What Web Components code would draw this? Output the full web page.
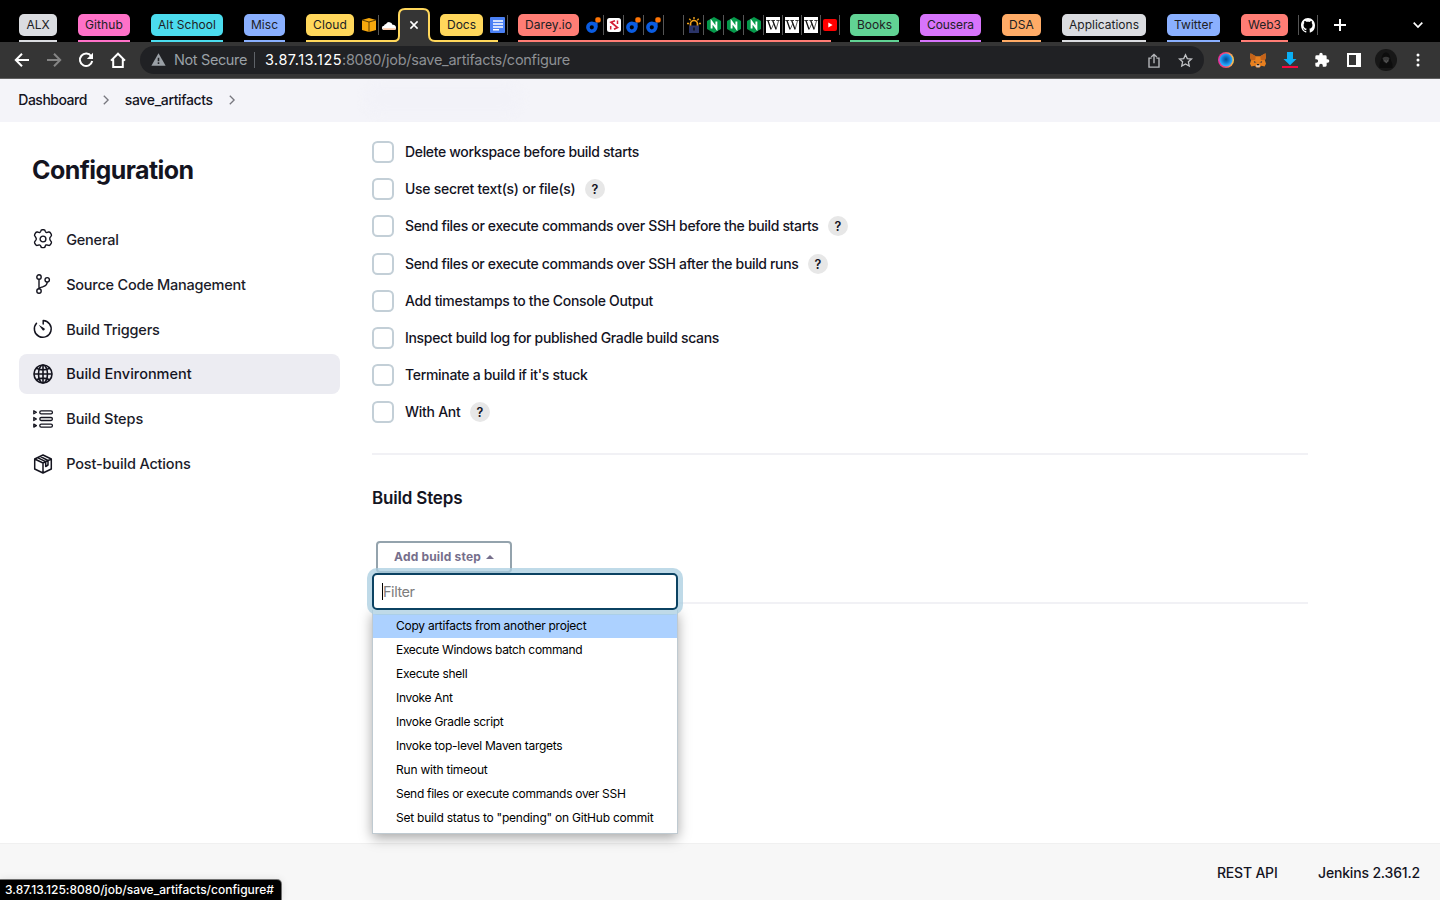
<!DOCTYPE html>
<html lang="en">
<head>
<meta charset="utf-8">
<title>save_artifacts Config [Jenkins]</title>
<style>
html,body{margin:0;height:100%;overflow:hidden;background:#fff}
body{font-family:Inter,"Liberation Sans",sans-serif;font-size:14px;color:#14141f}
</style>
</head>
<body>
<jenkins-window></jenkins-window>
<script>
const define = (name, html, extra) => {
  const t = document.createElement('template');
  t.innerHTML = html;
  customElements.define(name, class extends HTMLElement {
    constructor() {
      super();
      this.attachShadow({mode: 'open'}).appendChild(t.content.cloneNode(true));
    }
    connectedCallback() { if (extra) extra(this, this.shadowRoot); }
  });
};

const ICONS = {
  back: ['0 0 16 16', '<path d="M15 8H2M8 1.8 1.8 8 8 14.2" fill="none" stroke="#fff" stroke-width="2"/>'],
  forward: ['0 0 16 16', '<path d="M1 8h13M8 1.8 14.2 8 8 14.2" fill="none" stroke="#858585" stroke-width="2"/>'],
  reload: ['0 0 16 16', '<path d="M13.2 4.2A6.2 6.2 0 1 0 14.2 9" fill="none" stroke="#fff" stroke-width="2"/><path d="M15 .8V7H8.8z" fill="#fff"/>'],
  home: ['0 0 16 16', '<path d="M1 8.6 8 1.7l7 6.9M3.2 7.2V15h9.6V7.2" fill="none" stroke="#fff" stroke-width="2"/>'],
  warn: ['0 0 16 14', '<path d="M8 .4 15.6 13.6H.4z" fill="#9aa0a6"/><path d="M8 5.2v3.6M8 10v1.8" stroke="#202124" stroke-width="1.7"/>'],
  share: ['0 0 12 16', '<path d="M3.6 5.5H1V15h10V5.5H8.4M6 11V1.6M3.2 4.3 6 1.5l2.8 2.8" fill="none" stroke="#b4b6b9" stroke-width="1.4"/>'],
  star: ['0 0 16 16', '<path d="m8 1.800 1.900 4.100 4.500.5-3.300 3 .9 4.500L8 11.700l-4 2.200.9-4.500-3.300-3 4.500-.5z" fill="none" stroke="#c0c2c5" stroke-width="1.400"/>'],
  orb: ['0 0 16 16', '<defs><linearGradient id="g" x1="0" x2="1"><stop offset="0" stop-color="#f02aa0"/><stop offset=".5" stop-color="#f04a6a"/><stop offset="1" stop-color="#ffd34d"/></linearGradient><radialGradient id="b" cx=".5" cy=".45"><stop stop-color="#064a8c"/><stop offset=".5" stop-color="#0f78d0"/><stop offset="1" stop-color="#2fb0ff"/></radialGradient></defs><circle cx="8" cy="8" r="8" fill="url(#g)"/><circle cx="8" cy="8" r="6.500" fill="url(#b)"/>'],
  fox: ['0 0 16 16', '<path d="m.5.2 5.300 3.300h4.400L15.500.2l.3 4.800-.9 2.800 1.100 3.700-1.400 3-3.300-.9-1.800 1.900h-3l-1.800-1.900-3.300.9-1.400-3 1.100-3.700L.2 5z" fill="#e8801f"/><path d="m.5.2 5.300 3.300-.6 4-4.200.3L.2 5zM15.500.2l-5.300 3.300.6 4 4.200.3.800-2.800z" fill="#c4631a"/><path d="m3.800 8.600 2.700 1.300-2.300.5zM12.200 8.600 9.500 9.900l2.300.5z" fill="#3a3a44"/><path d="m6 13.400.9-1.100h2.200l.9 1.100-.5 1.800h-3z" fill="#d5bfb2"/><path d="m6.800 12.300.4-.7h1.600l.4.7-.2.800H7z" fill="#222"/>'],
  download: ['0 0 16 16', '<path d="M5 0h6v7h3.500L8 13.200 1.500 7H5z" fill="#0ab0f5"/><path d="M0 14h16v2H0z" fill="#f5083c"/>'],
  puzzle: ['0 0 24 24', '<path d="M20.500 11H19V7a2 2 0 0 0-2-2h-4V3.500a2.500 2.500 0 0 0-5 0V5H4a2 2 0 0 0-2 2v3.800h1.500a2.700 2.700 0 0 1 0 5.400H2V20a2 2 0 0 0 2 2h3.800v-1.500a2.700 2.700 0 0 1 5.400 0V22H17a2 2 0 0 0 2-2v-4h1.500a2.500 2.500 0 0 0 0-5z" fill="#fff"/>'],
  panel: ['0 0 14 14', '<path d="M0 0h14v14H0z" fill="#fff"/><path d="M2 2h7v10H2z" fill="#353535"/>'],
  avatar: ['0 0 22 22', '<circle cx="11" cy="11" r="11" fill="#171717"/><path d="M4.500 19c-.5-5 1-6 1.800-9C7 5.500 9 3.500 11 3.500s4 2 4.700 6.500c.5 3 2.300 4 1.800 9z" fill="#0d0d0d"/><path d="M7.500 9q3.500-2.500 7 0l-1 3.500-2.300 2-2.500-2z" fill="#3a3a3a"/><path d="m9.500 11 2 2.500 1.500-2.500" fill="none" stroke="#5c5c5c" stroke-width=".9"/>'],
  dots: ['0 0 4 14', '<circle cx="2" cy="2" r="1.500" fill="#fff"/><circle cx="2" cy="7" r="1.500" fill="#fff"/><circle cx="2" cy="12" r="1.500" fill="#fff"/>'],
  plus: ['0 0 12 12', '<path d="M6 0v12M0 6h12" stroke="#fff" stroke-width="2"/>'],
  down: ['0 0 10 6', '<path d="m.7.700 4.300 4.300L9.300.7" fill="none" stroke="#fff" stroke-width="1.700"/>'],
  close: ['0 0 8 8', '<path d="m.4.4 7.200 7.200M7.600.4.4 7.600" stroke="#fff" stroke-width="1.500"/>'],
  cube: ['0 0 14 14', '<path d="m7 0 7 2v10l-7 2-7-2V2z" fill="#f7a80d"/><path d="m0 2 7 2 7-2M7 4v10" stroke="#4c3200" fill="none" stroke-width=".9"/>'],
  cloud: ['0 0 14 9', '<path d="M2 9a2 2 0 0 1 0-4.200A2.300 2.300 0 0 1 4 3a3.500 3.500 0 0 1 6.500.800A3 3 0 0 1 14 7a2 2 0 0 1-1 2z" fill="#fff"/><path d="M.5 7.200h13.300L13 9H2z" fill="#fbc5a2"/>'],
  doc: ['0 0 15 16', '<rect width="15" height="16" rx="1" fill="#4a80f5"/><path d="M3 4h10M3 7h10M3 10h10M3 12.800h6" stroke="#fff" stroke-width="1.500"/>'],
  digital: ['0 0 15 16', '<circle cx="5.800" cy="10.300" r="3.900" fill="none" stroke="#0b5ce0" stroke-width="3.600"/><path d="M8 5.300h3.600v5H8z" fill="#0b5ce0"/><rect x="9.300" y=".3" width="5.400" height="5.200" rx="1.800" fill="#ff7505"/>'],
  script: ['0 0 14 14', '<rect width="14" height="14" rx="2.500" fill="#fff"/><path d="M8 2.800 4 4.200l6.500 5.300L7 11.300" fill="none" stroke="#d31f35" stroke-width="1.700"/><path d="M10.500 2.500v3.500M3.700 8v3.500" stroke="#d31f35" stroke-width="1.500"/>'],
  lock: ['0 0 14 16', '<path d="M7 0v2.200M2.300 1.700l1.500 1.700M11.700 1.700l-1.500 1.700M0 6.500h2M14 6.500h-2" stroke="#f0a21a" stroke-width="1.400"/><path d="M3.500 9V7a3.500 3.500 0 0 1 7 0v2" fill="none" stroke="#f5a21b" stroke-width="1.700"/><path d="M2 8.500h10V16H2z" fill="#2b3468"/><path d="M7 10.500v3" stroke="#111" stroke-width="1.600"/>'],
  nginx: ['0 0 14 16', '<path d="m7 0 7 4v8l-7 4-7-4V4z" fill="#059a4b"/><path d="M4.600 11.500V4.700l4.800 6.600V4.500" fill="none" stroke="#fff" stroke-width="1.900"/>'],
  wiki: ['0 0 14 16', '<path d="M0 0h14v16H0z" fill="#fff"/><path d="M.3 3.500h4M5.300 3.500h3.700M10.300 3.500h3.400" stroke="#222" stroke-width=".9"/><path d="m1.900 3.500 3.100 8.800M6.700 3.500l3.300 8.800" stroke="#111" stroke-width="1.300"/><path d="m5 12.600 2.800-6M10 12.600l2.600-9" stroke="#333" stroke-width=".8"/>'],
  youtube: ['0 0 14 12', '<rect width="14" height="12" rx="2" fill="#f00"/><path d="M5.300 3.600 9.600 6 5.300 8.400z" fill="#fff"/>'],
  github: ['0 0 16 16', '<path fill="#fff" d="M8 0C3.580 0 0 3.580 0 8c0 3.540 2.290 6.530 5.470 7.590.4.070.55-.17.55-.38v-1.490c-2.010.37-2.530-.49-2.690-.94-.09-.23-.48-.94-.82-1.130-.28-.15-.68-.52-.01-.53.63-.01 1.080.58 1.230.82.72 1.210 1.870.87 2.330.66.07-.52.28-.87.51-1.070-1.780-.2-3.640-.89-3.640-3.950 0-.87.31-1.590.82-2.150-.08-.2-.36-1.020.08-2.120 0 0 .67-.21 2.200.82A7.600 7.600 0 0 1 8 3.870c.68 0 1.360.09 2 .27 1.530-1.040 2.200-.82 2.200-.82.44 1.100.16 1.920.08 2.120.51.56.82 1.270.82 2.150 0 3.070-1.870 3.750-3.650 3.950.29.25.54.73.54 1.480v2.190c0 .21.15.46.55.38A8 8 0 0 0 16 8c0-4.420-3.580-8-8-8z"/>'],
  gear: ['0 0 20 20', '<g fill="none" stroke="#14141f" stroke-width="1.400"><circle cx="10" cy="10" r="2.900"/><path stroke-linejoin="round" d="M7.700 2.400Q8 .8 9.200.8h1.600q1.200 0 1.500 1.600.5 1.500 2 1l1.300-.4q1.200-.2 1.800.8l.9 1.500q.6 1.100-.5 2.200-1.500 1.300-1 2.500 0 .8 1 2 1.100 1.100.5 2.200l-.9 1.500q-.6 1-1.800.7l-1.300-.4q-1.500-.5-2 1-.3 1.600-1.500 1.600H9.200q-1.200 0-1.500-1.600-.5-1.500-2-1l-1.300.4q-1.200.3-1.800-.7l-.9-1.500q-.6-1.100.5-2.200 1.500-1.300 1-2.400 0-.8-1-2.100Q1.100 6.400 1.700 5.300l.9-1.500q.6-1 1.800-.8l1.300.4q1.500.5 2-1z"/></g>'],
  branch: ['0 0 20 20', '<g fill="none" stroke="#14141f" stroke-width="1.400"><circle cx="6" cy="3" r="2.200"/><circle cx="6" cy="17" r="2.200"/><circle cx="14.200" cy="5.800" r="2.200"/><path d="M6 5.200v9.600M14.200 8c0 3.800-2.500 4.200-4.500 4.800S6 13.500 6 15"/></g>'],
  timer: ['0 0 20 20', '<path d="M10.200 5V1.500A8.400 8.400 0 1 1 3.500 4.300" fill="none" stroke="#14141f" stroke-width="1.500" stroke-linecap="round" stroke-linejoin="round"/><path d="m5.600 5.800 6 3.800a1.300 1.300 0 0 1-1.700 1.800z" fill="#14141f"/>'],
  globe: ['0 0 20 20', '<g fill="none" stroke="#14141f" stroke-width="1.600"><circle cx="10" cy="10" r="9"/><ellipse cx="10" cy="10" rx="4.500" ry="9"/><path d="M10 1v18M1 10h18M3.300 4.300q6.700 3.200 13.400 0M3.300 15.700q6.700-3.200 13.400 0"/></g>'],
  steps: ['0 0 20 20', '<g fill="none" stroke="#14141f" stroke-width="1.300" stroke-linejoin="round"><rect x="6.800" y="1.800" width="12.600" height="3" rx="1.400"/><rect x="6.800" y="8.500" width="12.600" height="3" rx="1.400"/><rect x="6.800" y="15.100" width="12.600" height="3" rx="1.400"/><path d="M.8 1.800v3l2.600-1.500zM.8 8.500v3L3.400 10zM.8 15.100v3l2.600-1.500z"/></g>'],
  box: ['0 0 20 20', '<g fill="none" stroke="#14141f" stroke-width="1.500" stroke-linejoin="round"><path d="m10 1 8.300 4v10L10 19l-8.300-4V5zM1.700 5 10 9l8.300-4M10 9v10M4.500 3.700l8.200 4v4.800l2.300-1.500V6.500L7.200 2.400"/></g>'],
  crumb: ['0 0 6 10', '<path d="m.8.8 4.300 4.200L.8 9.200" fill="none" stroke="#77777f" stroke-width="1.300"/>'],
  caret: ['0 0 8 4', '<path d="M4 0 8 4H0z" fill="#766f8c"/>']
};

/* ui-icon: name, w, h */
define('ui-icon', `<style>:host{display:block;flex:none}svg{display:block;width:100%;height:100%;overflow:visible}</style>`, (el, root) => {
  const [box, body] = ICONS[el.getAttribute('name')];
  el.style.width = el.getAttribute('w') + 'px';
  el.style.height = el.getAttribute('h') + 'px';
  const holder = document.createElement('template');
  holder.innerHTML = `<svg viewBox="${box}" preserveAspectRatio="none">${body}</svg>`;
  root.appendChild(holder.content);
});

/* tab-chip: coloured group label */
define('tab-chip', `<style>:host{display:flex;align-items:center;justify-content:center;box-sizing:border-box;height:22px;flex:none;border-radius:5px;background:var(--c);color:#202124;font-size:12px;--lift:2px}</style><slot></slot>`,
  el => { el.style.width = el.getAttribute('w') + 'px'; });

/* tab-cell: a pinned-size tab with a favicon */
define('tab-cell', `<style>:host{display:flex;align-items:center;justify-content:center;box-sizing:border-box;height:20px;width:20px;flex:none;border-right:1px solid #555}:host([narrow]){width:19px}:host([plain]){border:0}</style><slot></slot>`);

/* tab-group: chip + tabs over a coloured line */
define('tab-group', `<style>:host{display:flex;flex-direction:column;height:28px;flex:none;justify-content:space-between;box-sizing:border-box}
.row{display:flex;align-items:center;height:22px}.line{height:2px;background:var(--c);margin-right:var(--trim,0)}</style>
<div class="row"><slot></slot></div><div class="line"></div>`, el => {
  el.style.setProperty('--c', el.getAttribute('color'));
  el.style.width = el.getAttribute('w') + 'px';
  el.style.marginRight = (el.getAttribute('after') || 21) + 'px';
});

define('browser-tabs', `<style>
:host{display:flex;box-sizing:border-box;height:42px;background:#000;padding:14px 0 0 19px;position:relative}
.active{display:block;width:46px;height:34px;margin:-6px 0 0 -3px;flex:none;position:relative}
.active svg{position:absolute;inset:0}.active ui-icon{position:absolute;left:16px;top:13px}
tab-chip+tab-cell{margin-left:5px}
.end{display:flex;align-items:center;height:22px}
.gh{display:flex;align-items:center;justify-content:center;width:18px;height:20px;border:solid #555;border-width:0 1px;margin-left:-11px}
</style>
<tab-group color="#dadce0" w="38"><tab-chip w="38"><ui-text w="23">ALX</ui-text></tab-chip></tab-group>
<tab-group color="#ff71c8" w="52"><tab-chip w="52"><ui-text w="38">Github</ui-text></tab-chip></tab-group>
<tab-group color="#4bdcee" w="72"><tab-chip w="72"><ui-text w="58">Alt School</ui-text></tab-chip></tab-group>
<tab-group color="#8ab0ff" w="41"><tab-chip w="41"><ui-text w="27">Misc</ui-text></tab-chip></tab-group>
<tab-group color="#ffd75b" w="91" after="0"><tab-chip w="48"><ui-text w="34">Cloud</ui-text></tab-chip><tab-cell><ui-icon name="cube" w="14" h="14"></ui-icon></tab-cell><tab-cell plain narrow><ui-icon name="cloud" w="14" h="9"></ui-icon></tab-cell></tab-group>
<div class="active"><svg width="46" height="34"><path d="M0 34q4 0 4-4V7q0-6 6-6h20q6 0 6 6v22q0 4 6 4h4v1z" fill="#353535"/><path d="M0 33q5 0 5-5V7q0-6 6-6h18q6 0 6 6v20q0 6 6 6h5" fill="none" stroke="#ffd75b" stroke-width="2"/></svg><ui-icon name="close" w="8" h="8"></ui-icon></div>
<tab-group color="#ffd75b" w="68" after="10" style="--trim:10px"><tab-chip w="43"><ui-text w="29">Docs</ui-text></tab-chip><tab-cell><ui-icon name="doc" w="15" h="16"></ui-icon></tab-cell></tab-group>
<tab-group color="#ff7d75" w="322" after="10" style="--trim:9px"><tab-chip w="61"><ui-text w="47">Darey.io</ui-text></tab-chip>
<tab-cell><ui-icon name="digital" w="15" h="16"></ui-icon></tab-cell><tab-cell><ui-icon name="script" w="14" h="14"></ui-icon></tab-cell><tab-cell><ui-icon name="digital" w="15" h="16"></ui-icon></tab-cell><tab-cell><ui-icon name="digital" w="15" h="16"></ui-icon></tab-cell><tab-cell></tab-cell><tab-cell><ui-icon name="lock" w="14" h="16"></ui-icon></tab-cell><tab-cell><ui-icon name="nginx" w="14" h="16"></ui-icon></tab-cell><tab-cell><ui-icon name="nginx" w="14" h="16"></ui-icon></tab-cell><tab-cell><ui-icon name="nginx" w="14" h="16"></ui-icon></tab-cell><tab-cell narrow><ui-icon name="wiki" w="14" h="16"></ui-icon></tab-cell><tab-cell narrow><ui-icon name="wiki" w="14" h="16"></ui-icon></tab-cell><tab-cell narrow><ui-icon name="wiki" w="14" h="16"></ui-icon></tab-cell><tab-cell narrow><ui-icon name="youtube" w="14" h="12"></ui-icon></tab-cell></tab-group>
<tab-group color="#61d394" w="49"><tab-chip w="49"><ui-text w="35">Books</ui-text></tab-chip></tab-group>
<tab-group color="#d774fb" w="61"><tab-chip w="61"><ui-text w="47">Cousera</ui-text></tab-chip></tab-group>
<tab-group color="#ffab66" w="39"><tab-chip w="39"><ui-text w="25">DSA</ui-text></tab-chip></tab-group>
<tab-group color="#dadce0" w="84"><tab-chip w="84"><ui-text w="70">Applications</ui-text></tab-chip></tab-group>
<tab-group color="#8ab0ff" w="53"><tab-chip w="53"><ui-text w="39">Twitter</ui-text></tab-chip></tab-group>
<tab-group color="#ff7d75" w="47"><tab-chip w="47"><ui-text w="33">Web3</ui-text></tab-chip></tab-group>
<div class="end"><div class="gh"><ui-icon name="github" w="14" h="15"></ui-icon></div><ui-icon name="plus" w="12" h="12" style="margin-left:16px"></ui-icon><ui-icon name="down" w="10" h="6" style="margin-left:67px"></ui-icon></div>`);

define('browser-toolbar', `<style>
:host{display:flex;align-items:center;box-sizing:border-box;height:37px;background:#353535;border-bottom:1px solid #606060;padding-left:14px;font-size:14.500px;--lift:2px}
.nav{display:flex;gap:16px;width:126px}
.omni{display:flex;align-items:center;box-sizing:border-box;width:1064px;height:28px;border-radius:14px;background:#202124;padding:0 11px 0 10.500px;color:#9aa0a6}
.omni .ns{margin-left:8.500px}.sep{width:1px;height:16px;background:#5f6368;margin:0 10px 0 7px}
.host{color:#fff}.rest{color:#8d9094}
.warn{padding-bottom:1px}
.right{display:flex;align-items:center;margin-left:auto;gap:18px}
.ext{display:flex;align-items:center;padding-left:14px}
</style>
<div class="nav"><ui-icon name="back" w="16" h="16"></ui-icon><ui-icon name="forward" w="16" h="16"></ui-icon><ui-icon name="reload" w="16" h="16"></ui-icon><ui-icon name="home" w="16" h="16"></ui-icon></div>
<div class="omni"><div class="warn"><ui-icon name="warn" w="15" h="13"></ui-icon></div><ui-text class="ns" w="73">Not Secure</ui-text><span class="sep"></span><ui-text class="host" w="77">3.87.13.125</ui-text><ui-text class="rest" w="228">:8080/job/save_artifacts/configure</ui-text>
<div class="right"><ui-icon name="share" w="12" h="15"></ui-icon><ui-icon name="star" w="15" h="15"></ui-icon></div></div>
<div class="ext"><ui-icon name="orb" w="16" h="16"></ui-icon><ui-icon name="fox" w="16" h="15" style="margin-left:16px"></ui-icon><ui-icon name="download" w="16" h="16" style="margin-left:16px"></ui-icon><ui-icon name="puzzle" w="16" h="16" style="margin-left:16px"></ui-icon><ui-icon name="panel" w="14" h="14" style="margin-left:17px"></ui-icon><ui-icon name="avatar" w="22" h="22" style="margin-left:14px"></ui-icon><ui-icon name="dots" w="4" h="14" style="margin-left:19px"></ui-icon></div>`);

define('crumb-bar', `<style>:host{display:flex;align-items:center;box-sizing:border-box;height:43px;background:#f4f4f9;padding:0 0 1px 18.300px;font-size:14px;font-weight:450;position:relative;overflow:hidden;--lift:1px}
i{position:absolute;left:366px;top:4px;width:155px;height:32px;border-radius:16px;background:#f2f2f8;filter:blur(5px)}</style>
<i></i><ui-text w="68.500">Dashboard</ui-text><ui-icon name="crumb" w="6" h="10" style="margin:0 16px"></ui-icon><ui-text w="88">save_artifacts</ui-text><ui-icon name="crumb" w="6" h="10" style="margin-left:16px"></ui-icon>`);

define('side-item', `<style>:host{display:flex;align-items:center;box-sizing:border-box;height:40px;border-radius:8px;padding-left:14px;gap:13.200px;font-size:14.500px;font-weight:500;color:#1b1b29;--lift:2px}:host([active]){background:#ececf2;color:#14141f}:host([high]){--icon-lift:2px}.ic{padding-bottom:var(--icon-lift,0)}</style><span class="ic"><slot name="icon"></slot></span><slot></slot>`);

define('side-panel', `<style>:host{display:block;width:321px;padding:0 0 0 19px;flex:none}
h1{margin:31px 0 0 13px;font-size:25px;line-height:34px;font-weight:700;height:67px}
nav{display:flex;flex-direction:column;gap:5px}side-item[active]{margin-top:-1px}</style>
<h1><ui-text w="161.500">Configuration</ui-text></h1>
<nav>
<side-item high><ui-icon slot="icon" name="gear" w="20" h="20"></ui-icon><ui-text w="52.500">General</ui-text></side-item>
<side-item high><ui-icon slot="icon" name="branch" w="20" h="20"></ui-icon><ui-text w="179.500">Source Code Management</ui-text></side-item>
<side-item high><ui-icon slot="icon" name="timer" w="20" h="20"></ui-icon><ui-text w="93.500">Build Triggers</ui-text></side-item>
<side-item active><ui-icon slot="icon" name="globe" w="20" h="20"></ui-icon><ui-text w="125.500">Build Environment</ui-text></side-item>
<side-item><ui-icon slot="icon" name="steps" w="20" h="20"></ui-icon><ui-text w="77">Build Steps</ui-text></side-item>
<side-item><ui-icon slot="icon" name="box" w="20" h="20"></ui-icon><ui-text w="124.500">Post-build Actions</ui-text></side-item>
</nav>`);

define('check-row', `<style>:host{display:flex;align-items:center;height:22px;font-weight:500;font-size:14px;--lift:1px}
.box{box-sizing:border-box;width:22px;height:22px;border:2px solid #c3cfd7;border-radius:5.500px;margin-right:11px;flex:none}
.help{display:none;align-items:center;justify-content:center;width:20px;height:20px;border-radius:50%;background:#e7e7e7;font-size:12.500px;font-weight:600;margin-left:9.500px}
:host([help]) .help{display:flex}</style><span class="box"></span><slot></slot><span class="help">?</span>`);

define('step-menu', `<style>
:host{display:block;position:absolute;left:0;top:118px;width:306px;z-index:2}
.filter{box-sizing:border-box;height:37px;border:2px solid #0b4262;border-radius:5px;background:#fff;box-shadow:0 0 0 5px rgba(170,206,224,.75);display:flex;align-items:center;padding-left:8px;font-size:14.500px;color:#7d7d7d;position:relative;z-index:1}
.caret{width:1px;height:17px;background:#000}
.list{box-sizing:border-box;border:1px solid #bfcad1;border-top:0;background:#fff;padding:4px 0 3px;box-shadow:0 4px 12px rgba(0,0,0,.35);font-size:12px;color:#000;--lift:2px}
.opt{height:24px;display:flex;align-items:center;padding-left:23px}
.opt.on{background:#acd1ff}
</style>
<div class="filter"><span class="caret"></span><ui-text w="31.500">Filter</ui-text></div>
<div class="list">
<div class="opt on"><ui-text w="190.300">Copy artifacts from another project</ui-text></div>
<div class="opt"><ui-text w="186.300">Execute Windows batch command</ui-text></div>
<div class="opt"><ui-text w="71.300">Execute shell</ui-text></div>
<div class="opt"><ui-text w="56.500">Invoke Ant</ui-text></div>
<div class="opt"><ui-text w="107.500">Invoke Gradle script</ui-text></div>
<div class="opt"><ui-text w="166.300">Invoke top-level Maven targets</ui-text></div>
<div class="opt"><ui-text w="91.500">Run with timeout</ui-text></div>
<div class="opt"><ui-text w="229.500">Send files or execute commands over SSH</ui-text></div>
<div class="opt"><ui-text w="257.500">Set build status to "pending" on GitHub commit</ui-text></div>
</div>`);

define('config-form', `<style>
:host{display:block;width:936px;margin-left:32px;padding-top:19px}
.checks{display:flex;flex-direction:column;gap:15px}
.checks check-row:nth-child(4){margin-top:1px}
.rule{height:2px;background:#f1f1f5}
.checks+.rule{margin-top:30px}
.steps{position:relative;height:147px}
h2{margin:0;padding-top:32px;font-size:17px;line-height:22px;font-weight:600}
button{all:unset;box-sizing:border-box;display:flex;align-items:center;width:136px;height:32px;margin:32px 0 0 4px;border:2px solid #94a3ad;border-radius:4px;padding-left:16px;font-size:12px;font-weight:700;color:#766f8c;gap:5px;--lift:2px}
</style>
<div class="checks">
<check-row><ui-text w="234">Delete workspace before build starts</ui-text></check-row>
<check-row help><ui-text w="170.500">Use secret text(s) or file(s)</ui-text></check-row>
<check-row help><ui-text w="413.500">Send files or execute commands over SSH before the build starts</ui-text></check-row>
<check-row help><ui-text w="393.500">Send files or execute commands over SSH after the build runs</ui-text></check-row>
<check-row><ui-text w="248">Add timestamps to the Console Output</ui-text></check-row>
<check-row><ui-text w="314">Inspect build log for published Gradle build scans</ui-text></check-row>
<check-row><ui-text w="182.500">Terminate a build if it's stuck</ui-text></check-row>
<check-row help><ui-text w="55.500">With Ant</ui-text></check-row>
</div>
<div class="rule"></div>
<div class="steps"><h2><ui-text w="90.300">Build Steps</ui-text></h2><button><ui-text w="87">Add build step</ui-text><ui-icon name="caret" w="8" h="4"></ui-icon></button><step-menu></step-menu></div>
<div class="rule"></div>`);

define('page-footer', `<style>:host{display:flex;align-items:center;justify-content:flex-end;box-sizing:border-box;height:57px;background:#f7f7f7;border-top:1px solid #f0f0f0;padding:1px 20px 0 0;gap:40.500px;font-weight:500}
.status{position:absolute;left:0;bottom:0;display:flex;align-items:center;box-sizing:border-box;width:281px;height:20px;background:#000;border-top-right-radius:4px;padding-left:5px;color:#fff;font-size:12px;font-weight:500;box-shadow:0 0 8px rgba(0,0,0,.12),0 0 0 1px #777;--lift:2px}</style>
<ui-text w="60.500">REST API</ui-text><ui-text w="102">Jenkins 2.361.2</ui-text>
<div class="status"><ui-text w="269">3.87.13.125:8080/job/save_artifacts/configure#</ui-text></div>`);

define('jenkins-window', `<style>:host{display:flex;flex-direction:column;width:1440px;height:900px;position:relative;overflow:hidden;background:#fff}
main{display:flex;flex:1;min-height:0}page-footer{flex:none}</style>
<browser-tabs></browser-tabs><browser-toolbar></browser-toolbar><crumb-bar></crumb-bar>
<main><side-panel></side-panel><config-form></config-form></main>
<page-footer></page-footer>`);

/* ui-text: one line of text, tracked so that it sets to the width w */
define('ui-text', `<style>:host{display:inline-block;white-space:nowrap;flex:none;padding-bottom:var(--lift,0)}</style><slot></slot>`, el => {
  const w = parseFloat(el.getAttribute('w'));
  el.style.letterSpacing = '0';
  const natural = el.getBoundingClientRect().width;
  el.style.letterSpacing = ((w - natural) / el.textContent.length).toFixed(3) + 'px';
});
</script>
</body>
</html>
